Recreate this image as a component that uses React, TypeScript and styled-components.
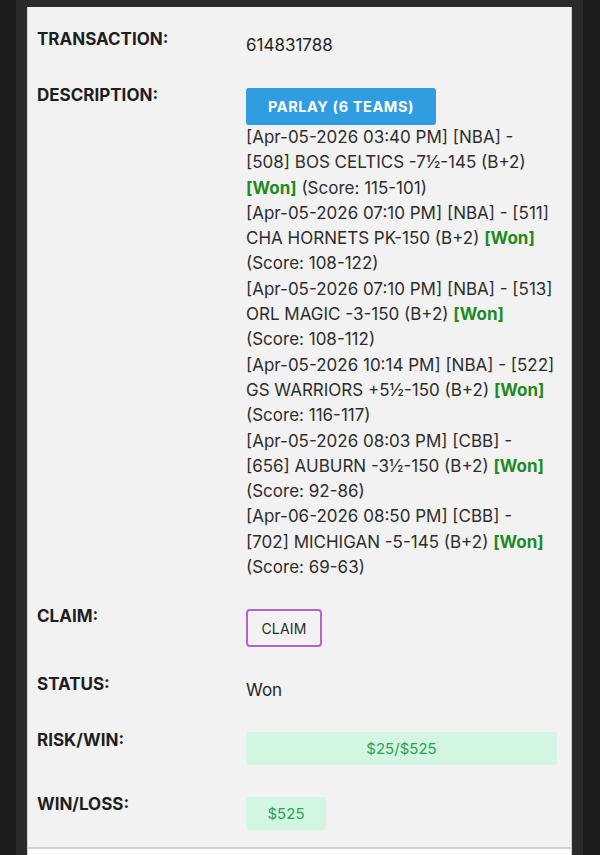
import * as React from "react";
import styled, {createGlobalStyle} from "styled-components";

interface Leg {
    lines: string[];
    score: string;
    // index of the line that ends with the [Won] tag
    wonLine: number;
}

const legs: Leg[] = [
    {lines: ["[Apr-05-2026 03:40 PM] [NBA] -", "[508] BOS CELTICS -7½-145 (B+2)", ""], wonLine: 2, score: "(Score: 115-101)"},
    {lines: ["[Apr-05-2026 07:10 PM] [NBA] - [511]", "CHA HORNETS PK-150 (B+2)"], wonLine: 1, score: "(Score: 108-122)"},
    {lines: ["[Apr-05-2026 07:10 PM] [NBA] - [513]", "ORL MAGIC -3-150 (B+2)"], wonLine: 1, score: "(Score: 108-112)"},
    {lines: ["[Apr-05-2026 10:14 PM] [NBA] - [522]", "GS WARRIORS +5½-150 (B+2)"], wonLine: 1, score: "(Score: 116-117)"},
    {lines: ["[Apr-05-2026 08:03 PM] [CBB] -", "[656] AUBURN -3½-150 (B+2)"], wonLine: 1, score: "(Score: 92-86)"},
    {lines: ["[Apr-06-2026 08:50 PM] [CBB] -", "[702] MICHIGAN -5-145 (B+2)"], wonLine: 1, score: "(Score: 69-63)"},
];

const GlobalStyle = createGlobalStyle`
    html, body {
        margin: 0;
        padding: 0;
        background: #1c1c1c;
        font-family: Inter, "Liberation Sans", Arial, sans-serif;
    }
`;

const Screen = styled.div`
    width: 600px;
    height: 855px;
    overflow: hidden;
    padding: 0 17px 0 16px;
    box-sizing: border-box;
`;

const Column = styled.div`
    height: 100%;
    background: #2a2b2b;
    padding: 7px 11px 0 11px;
    box-sizing: border-box;
`;

const Panel = styled.div`
    background: #f2f2f2;
    border-left: 1px solid #d0d0d0;
    border-right: 1px solid #d0d0d0;
    padding: 6px 13px 4px 9px;
`;

const Row = styled.div<{$trim?: number}>`
    display: flex;
    align-items: flex-start;
    padding: 15px 0 ${(p) => 13 - (p.$trim ?? 0)}px;
`;

const Label = styled.div`
    width: 209px;
    flex-shrink: 0;
    font-size: 17px;
    line-height: 22px;
    font-weight: 700;
    color: #1e1e1e;
`;

const Value = styled.div<{$offset: number}>`
    flex: 1;
    margin-top: ${(p) => p.$offset}px;
    font-size: 17px;
    line-height: 22px;
    color: #262626;
`;

const ParlayButton = styled.div`
    display: inline-flex;
    align-items: center;
    justify-content: center;
    width: 190px;
    height: 37px;
    background: #2f9de0;
    color: #fff;
    border-radius: 3px;
    font-size: 14.5px;
    font-weight: 700;
    letter-spacing: 0.6px;
`;

const Legs = styled.div`
    font-size: 17px;
    line-height: 25.3px;
    color: #2d2d2d;
    white-space: nowrap;
`;

const Line = styled.div``;

const WonTag = styled.span`
    color: #1f8a1f;
    font-weight: 700;
`;

const ClaimButton = styled.button`
    display: block;
    width: 76px;
    height: 38px;
    background: transparent;
    border: 2px solid #b662cf;
    border-radius: 4px;
    font-family: inherit;
    font-size: 14px;
    color: #2b2b2b;
    letter-spacing: 0.2px;
    padding: 0;
`;

const Amount = styled.div<{$wide?: boolean}>`
    width: ${(p) => (p.$wide ? "311px" : "80px")};
    height: 33px;
    display: flex;
    align-items: center;
    justify-content: center;
    background: #d3f6e2;
    border-radius: 3px;
    color: #2f9f52;
    font-size: 15px;
`;

const NextCard = styled.div`
    height: 20px;
    background: #fff;
    border-top: 2px solid #cfcfcf;
    border-left: 1px solid #d0d0d0;
    border-right: 1px solid #d0d0d0;
`;

const LegLines: React.FC<{leg: Leg}> = ({leg}) => (
    <>
        {leg.lines.map((line, i) => {
            if (i === leg.wonLine) {
                return (
                    <Line key={i}>
                        {line}
                        {line ? " " : ""}
                        <WonTag>[Won]</WonTag>
                        {line ? "" : " " + leg.score}
                    </Line>
                );
            }
            return <Line key={i}>{line}</Line>;
        })}
        {leg.lines[leg.wonLine] !== "" && <Line>{leg.score}</Line>}
    </>
);

const App: React.FC = () => {
    return (
        <Screen>
            <GlobalStyle />
            <Column>
                <Panel>
                    <Row>
                        <Label>TRANSACTION:</Label>
                        <Value $offset={6}>614831788</Value>
                    </Row>
                    <Row $trim={3}>
                        <Label>DESCRIPTION:</Label>
                        <Value $offset={4}>
                            <ParlayButton>PARLAY (6 TEAMS)</ParlayButton>
                            <Legs>
                                {legs.map((leg, i) => (
                                    <LegLines key={i} leg={leg} />
                                ))}
                            </Legs>
                        </Value>
                    </Row>
                    <Row $trim={2}>
                        <Label>CLAIM:</Label>
                        <Value $offset={4}>
                            <ClaimButton>CLAIM</ClaimButton>
                        </Value>
                    </Row>
                    <Row>
                        <Label>STATUS:</Label>
                        <Value $offset={6}>Won</Value>
                    </Row>
                    <Row>
                        <Label>RISK/WIN:</Label>
                        <Value $offset={3}>
                            <Amount $wide>$25/$525</Amount>
                        </Value>
                    </Row>
                    <Row>
                        <Label>WIN/LOSS:</Label>
                        <Value $offset={4}>
                            <Amount>$525</Amount>
                        </Value>
                    </Row>
                </Panel>
                <NextCard />
            </Column>
        </Screen>
    );
};

export default App;
